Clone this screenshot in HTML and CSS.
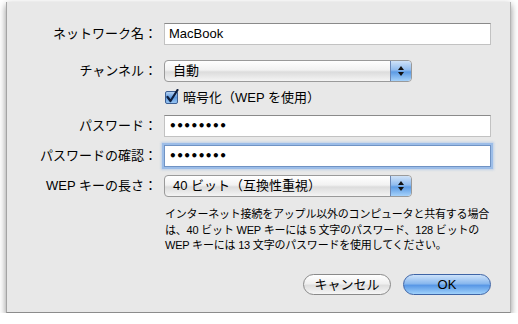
FILE: index.html
```html
<!DOCTYPE html>
<html lang="ja">
<head>
    <meta charset="UTF-8">
    <title>ネットワークを作成</title>
    <link rel="stylesheet" href="styles.css">
</head>
<body>
    <div class="sheet">
        <div class="row row-first">
            <label class="label">ネットワーク名：</label>
            <div class="field">MacBook</div>
        </div>
        <div class="row row-channel">
            <label class="label">チャンネル：</label>
            <div class="popup">
                <span class="popup-text">自動</span>
                <span class="popup-arrows">
                    <svg width="8" height="12" viewBox="0 0 8 12"><path d="M4 1 L7 5 L1 5 Z M1 7 L7 7 L4 11 Z" fill="#111"/></svg>
                </span>
            </div>
        </div>
        <div class="row row-check">
            <span class="label"></span>
            <span class="checkbox">
                <svg width="16" height="16" viewBox="0 0 16 16">
                    <defs>
                        <linearGradient id="cb" x1="0" y1="0" x2="0" y2="1">
                            <stop offset="0" stop-color="#bcd6f4"/>
                            <stop offset="0.5" stop-color="#5f9be0"/>
                            <stop offset="1" stop-color="#9cc8f4"/>
                        </linearGradient>
                    </defs>
                    <rect x="1.5" y="2.5" width="12" height="12" rx="1.5" fill="url(#cb)" stroke="#3d5f93"/>
                    <path d="M3.5 8 L6.5 12 L13.5 1" fill="none" stroke="#0d1e3e" stroke-width="2.2" stroke-linecap="round" stroke-linejoin="round"/>
                </svg>
            </span>
            <span class="check-text">暗号化（WEP を使用）</span>
        </div>
        <div class="row row-pass">
            <label class="label">パスワード：</label>
            <div class="field dots">••••••••</div>
        </div>
        <div class="row row-confirm">
            <label class="label">パスワードの確認：</label>
            <div class="field dots focused">••••••••</div>
        </div>
        <div class="row row-wep">
            <label class="label">WEP キーの長さ：</label>
            <div class="popup">
                <span class="popup-text">40 ビット（互換性重視）</span>
                <span class="popup-arrows">
                    <svg width="8" height="12" viewBox="0 0 8 12"><path d="M4 1 L7 5 L1 5 Z M1 7 L7 7 L4 11 Z" fill="#111"/></svg>
                </span>
            </div>
        </div>
        <p class="help">インターネット接続をアップル以外のコンピュータと共有する場合<br>は、40 ビット WEP キーには 5 文字のパスワード、128 ビットの<br>WEP キーには 13 文字のパスワードを使用してください。</p>
        <div class="buttons">
            <button class="btn">キャンセル</button>
            <button class="btn btn-default">OK</button>
        </div>
    </div>
</body>
</html>
```

FILE: styles.css
```css
body {
    margin: 0;
    background: #ffffff;
    font-family: "Liberation Sans", "Noto Sans CJK JP", sans-serif;
    font-size: 13px;
    color: #000;
}

.sheet {
    box-sizing: border-box;
    width: 505px;
    height: 311px;
    margin: 2px 0 0 6px;
    padding-top: 21px;
    background: #e8e8e8;
    border-left: 1px solid #a4a4a4;
    border-right: 1px solid #b4b4b4;
    border-bottom: 1px solid #8c8c8c;
    box-shadow: 0 3px 7px rgba(0, 0, 0, 0.45);
}

.row {
    display: flex;
    align-items: center;
    height: 22px;
}

.row-channel { margin-top: 15px; }
.row-check { margin-top: 9px; height: 14px; }
.row-pass { margin-top: 10px; }
.row-confirm { margin-top: 8px; }
.row-wep { margin-top: 8px; }

.label {
    width: 150px;
    margin-right: 7px;
    text-align: right;
    line-height: 22px;
    white-space: nowrap;
}

.field {
    box-sizing: border-box;
    width: 327px;
    height: 22px;
    padding-left: 4px;
    line-height: 20px;
    background: #fff;
    border: 1px solid #c2c2c2;
    border-top-color: #8a8a8a;
}

.dots {
    font-family: "DejaVu Sans", sans-serif;
    font-size: 12px;
    font-weight: bold;
    letter-spacing: -0.5px;
}

.focused {
    border-color: #7093c4;
    box-shadow: 0 0 0 2px #9cbde8, 0 0 2px 3px rgba(140, 180, 230, 0.45);
}

.popup {
    box-sizing: border-box;
    display: flex;
    width: 248px;
    height: 22px;
    border: 1px solid #9a9a9a;
    border-radius: 4px;
    background: linear-gradient(#ffffff 0%, #f2f2f2 45%, #dcdcdc 55%, #f4f4f4 100%);
    overflow: hidden;
}

.popup-text {
    flex: 1;
    padding-left: 8px;
    line-height: 20px;
    white-space: nowrap;
}

.popup-arrows {
    display: flex;
    align-items: center;
    justify-content: center;
    width: 20px;
    border-left: 1px solid #6a86b4;
    border-radius: 0 3px 3px 0;
    background: linear-gradient(#cfe2f8 0%, #8fbbee 45%, #5c9be4 55%, #a6d2fa 100%);
}

.checkbox {
    width: 16px;
    height: 16px;
    margin-top: -3px;
}

.check-text {
    margin-left: 3px;
    line-height: 14px;
}

.help {
    margin: 10px 0 0 158px;
    font-size: 11px;
    letter-spacing: -0.2px;
    line-height: 15.5px;
    white-space: nowrap;
}

.buttons {
    display: flex;
    justify-content: flex-end;
    gap: 12px;
    margin: 20px 19px 0 0;
}

.btn {
    box-sizing: border-box;
    width: 88px;
    height: 21px;
    padding: 0;
    font-family: inherit;
    font-size: 13px;
    line-height: 19px;
    color: #000;
    border: 1px solid #8a8a8a;
    border-radius: 11px;
    background: linear-gradient(#ffffff 0%, #f0f0f0 45%, #dedede 55%, #f6f6f6 100%);
}

.btn-default {
    border-color: #3e64a6;
    background: linear-gradient(#cde2fa 0%, #89b8ee 45%, #5998e6 55%, #9fd1fb 100%);
}
```
